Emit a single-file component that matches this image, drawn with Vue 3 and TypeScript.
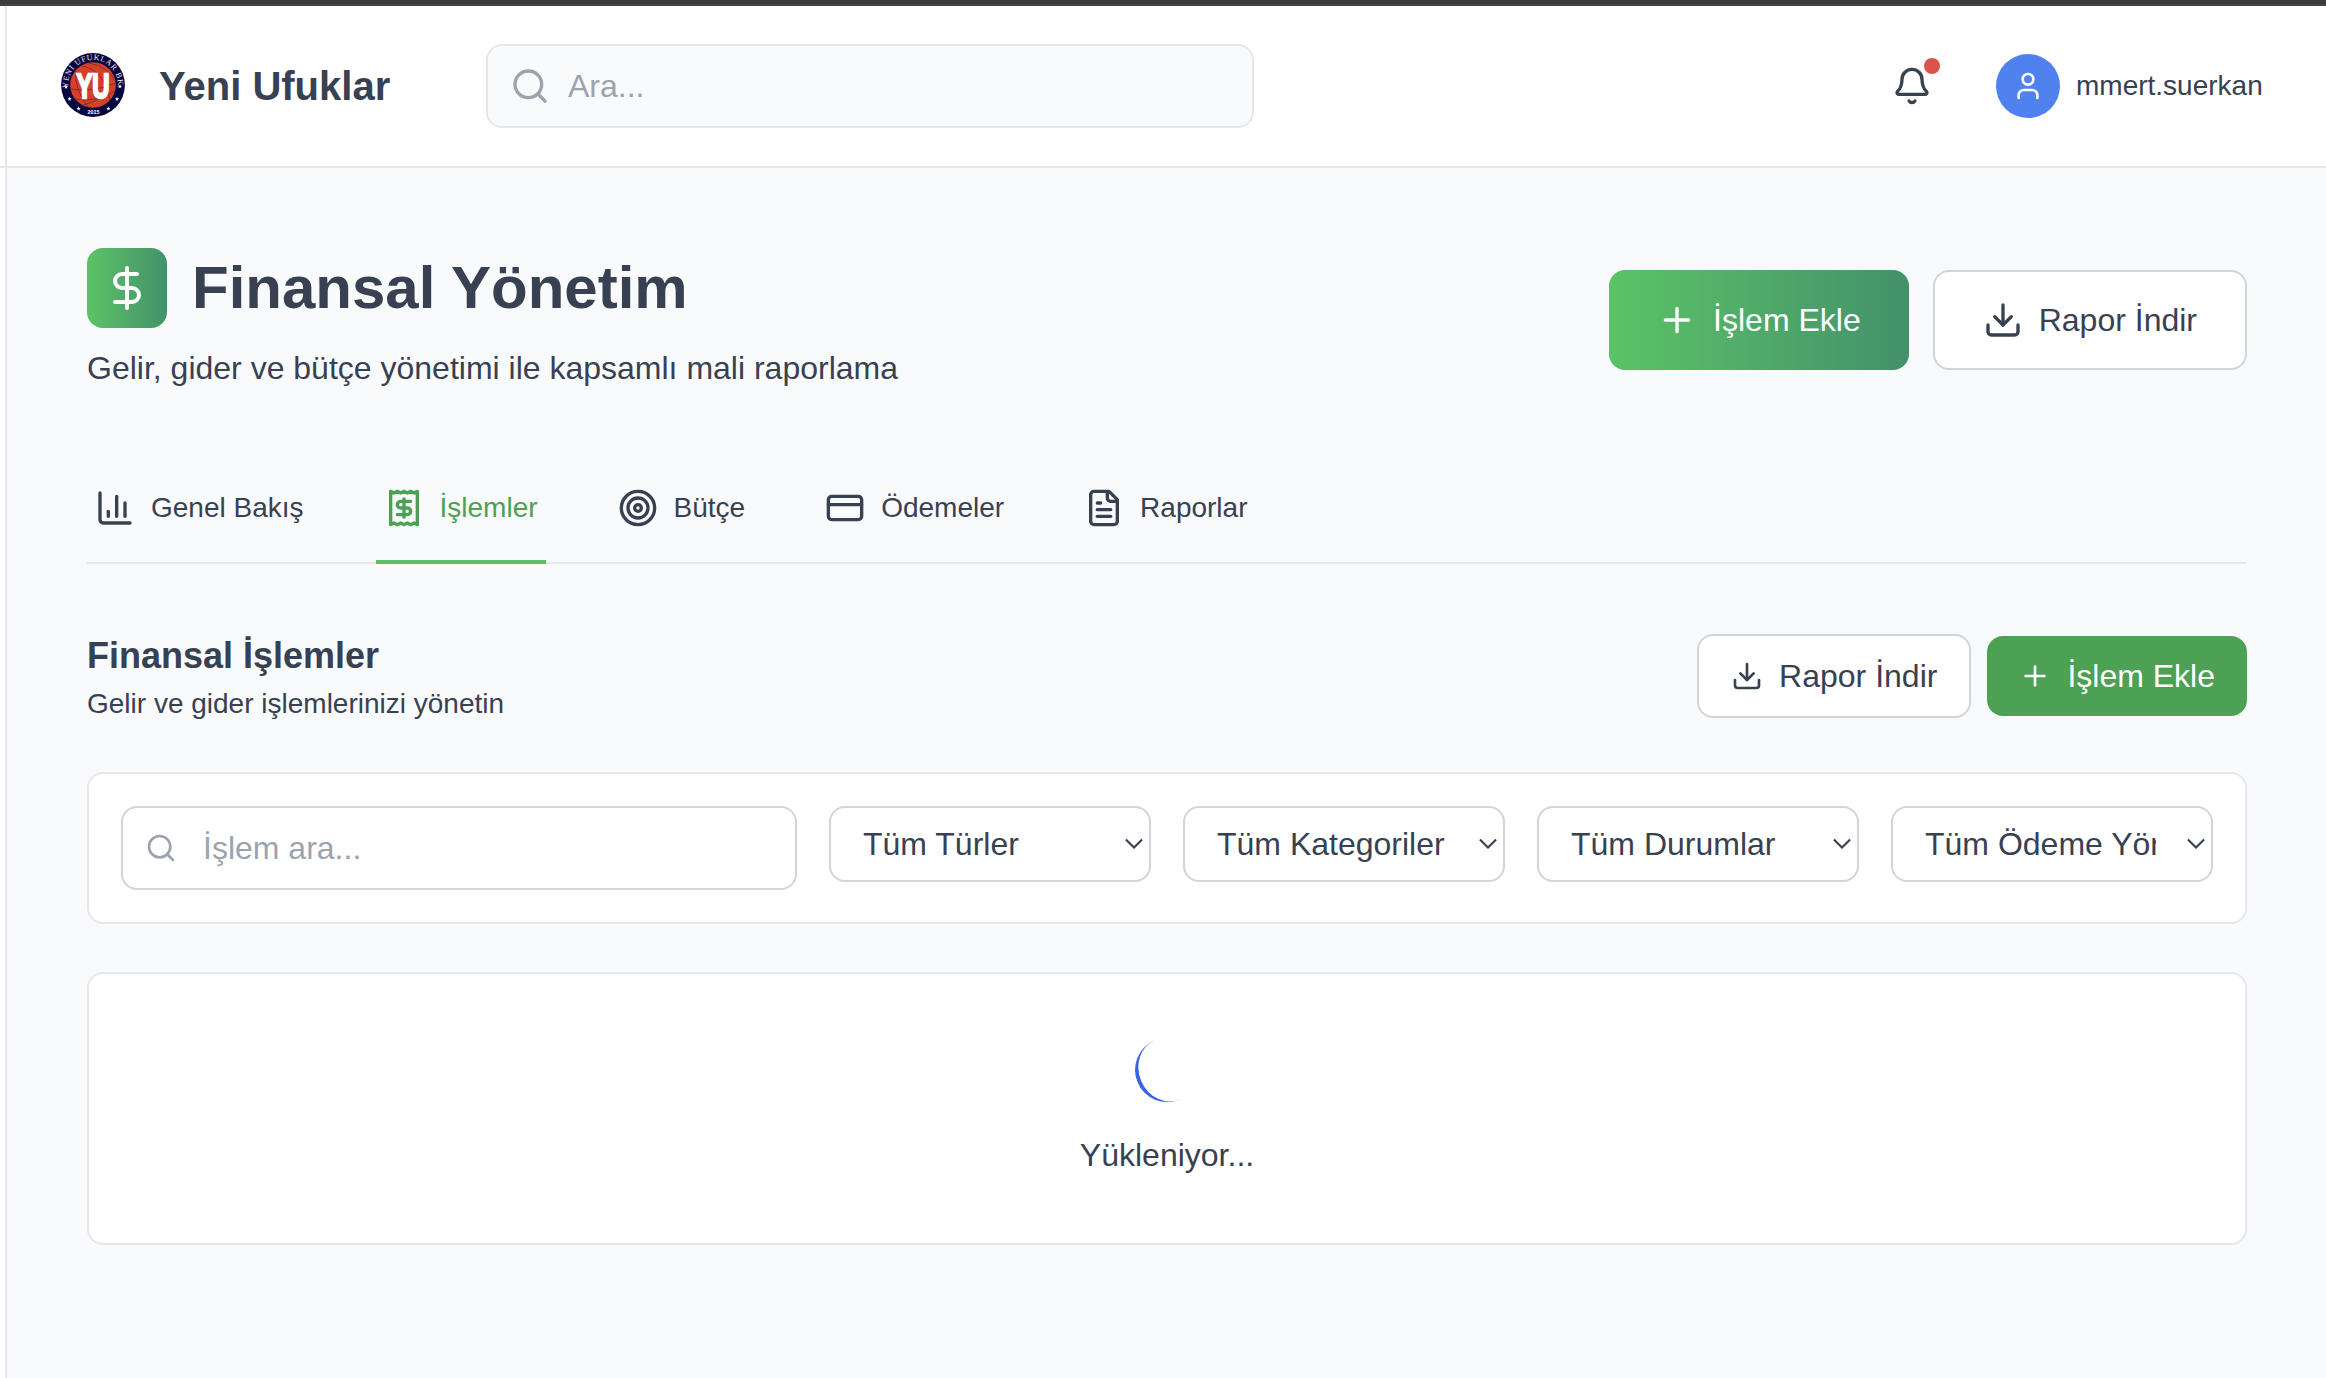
<script setup lang="ts">
import { h, type FunctionalComponent } from 'vue'

const iconPaths: Record<string, string[]> = {
  search: ['m21 21-4.34-4.34', 'M19 11a8 8 0 1 1-16 0a8 8 0 0 1 16 0Z'],
  bell: [
    'M10.268 21a2 2 0 0 0 3.464 0',
    'M3.262 15.326A1 1 0 0 0 4 17h16a1 1 0 0 0 .74-1.673C19.41 13.956 18 12.499 18 8A6 6 0 0 0 6 8c0 4.499-1.411 5.956-2.738 7.326',
  ],
  user: ['M19 21v-2a4 4 0 0 0-4-4H9a4 4 0 0 0-4 4v2', 'M16 7a4 4 0 1 1-8 0a4 4 0 0 1 8 0Z'],
  dollar: ['M12 2v20', 'M17 5H9.5a3.5 3.5 0 0 0 0 7h5a3.5 3.5 0 0 1 0 7H6'],
  plus: ['M5 12h14', 'M12 5v14'],
  download: ['M12 15V3', 'M21 15v4a2 2 0 0 1-2 2H5a2 2 0 0 1-2-2v-4', 'm7 10 5 5 5-5'],
  chart: ['M3 3v16a2 2 0 0 0 2 2h16', 'M18 17V9', 'M13 17V5', 'M8 17v-3'],
  receipt: [
    'M4 2v20l2-1 2 1 2-1 2 1 2-1 2 1 2-1 2 1V2l-2 1-2-1-2 1-2-1-2 1-2-1-2 1Z',
    'M16 8h-6a2 2 0 1 0 0 4h4a2 2 0 1 1 0 4H8',
    'M12 17.5v-11',
  ],
  target: [
    'M22 12a10 10 0 1 1-20 0a10 10 0 0 1 20 0Z',
    'M18 12a6 6 0 1 1-12 0a6 6 0 0 1 12 0Z',
    'M14 12a2 2 0 1 1-4 0a2 2 0 0 1 4 0Z',
  ],
  card: ['M4 5h16a2 2 0 0 1 2 2v10a2 2 0 0 1-2 2H4a2 2 0 0 1-2-2V7a2 2 0 0 1 2-2Z', 'M2 10h20'],
  file: [
    'M15 2H6a2 2 0 0 0-2 2v16a2 2 0 0 0 2 2h12a2 2 0 0 0 2-2V7Z',
    'M14 2v4a2 2 0 0 0 2 2h4',
    'M10 9H8',
    'M16 13H8',
    'M16 17H8',
  ],
}

const Icon: FunctionalComponent<{ name: string; size: number }> = (props) =>
  h(
    'svg',
    {
      width: props.size,
      height: props.size,
      viewBox: '0 0 24 24',
      fill: 'none',
      stroke: 'currentColor',
      'stroke-width': 2,
      'stroke-linecap': 'round',
      'stroke-linejoin': 'round',
      style: { display: 'block', flex: 'none' },
    },
    iconPaths[props.name].map((d) => h('path', { d })),
  )
Icon.props = ['name', 'size']

interface Tab {
  label: string
  icon: string
  active?: boolean
}

const tabs: Tab[] = [
  { label: 'Genel Bakış', icon: 'chart' },
  { label: 'İşlemler', icon: 'receipt', active: true },
  { label: 'Bütçe', icon: 'target' },
  { label: 'Ödemeler', icon: 'card' },
  { label: 'Raporlar', icon: 'file' },
]

const filters: string[] = ['Tüm Türler', 'Tüm Kategoriler', 'Tüm Durumlar', 'Tüm Ödeme Yöntemleri']

const stars = [
  [5, 34], [8.6, 46], [17.6, 55.6], [47.4, 55.6], [56, 46], [59, 33.4],
]
</script>

<template>
  <div class="window">
    <div class="frame-edge"></div>
    <div class="body">
      <div class="side"><div class="side-top"></div></div>
      <div class="app">
        <header class="topbar">
          <svg class="logo" width="64" height="64" viewBox="0 0 64 64">
            <defs>
              <path id="ring" d="M7.74 38A25 25 0 1 1 56.26 38" />
            </defs>
            <circle cx="32" cy="32" r="31.9" fill="#05053f" />
            <circle cx="32" cy="32" r="22.8" fill="#d5402b" />
            <g fill="none" stroke="#8f2a26" stroke-width="1">
              <path d="M9.5 36q22 4 45-6" />
              <path d="M20 13q22 2 29 34" />
              <path d="M28 10q20 4 26 18" />
              <path d="M14 46q20 4 40-8" />
              <path d="M22 52q16-4 26-14" />
              <path d="M15 18q-2 18 12 36" />
            </g>
            <text class="ring-text" font-size="8" fill="#e8e8f2">
              <textPath href="#ring" startOffset="50%" text-anchor="middle" textLength="84">YENİ UFUKLAR BK.</textPath>
            </text>
            <text
              class="mono-text"
              x="32"
              y="45"
              text-anchor="middle"
              font-size="34.5"
              textLength="33"
              lengthAdjust="spacingAndGlyphs"
              fill="#fff"
              stroke="#fff"
              stroke-width="2.4"
            >YU</text>
            <text class="year-text" x="32.5" y="60.6" text-anchor="middle" font-size="5.4" fill="#fff">2015</text>
            <path
              v-for="(s, i) in stars"
              :key="i"
              :transform="`translate(${s[0]} ${s[1]})`"
              d="M0-2.2 .6-.7 2.1-.7 .9.3 1.3 1.8 0 .9-1.3 1.8-.9.3-2.1-.7-.6-.7Z"
              fill="#fff"
            />
          </svg>
          <div class="brand">Yeni Ufuklar</div>
          <div class="global-search">
            <Icon name="search" :size="40" />
            <span>Ara...</span>
          </div>
          <div class="bell">
            <Icon name="bell" :size="40" />
            <i class="dot"></i>
          </div>
          <div class="avatar"><Icon name="user" :size="32" /></div>
          <div class="username">mmert.suerkan</div>
        </header>

        <main class="page">
          <section class="hero">
            <div>
              <div class="hero-title">
                <div class="hero-icon"><Icon name="dollar" :size="48" /></div>
                <h1>Finansal Yönetim</h1>
              </div>
              <p class="hero-sub">Gelir, gider ve bütçe yönetimi ile kapsamlı mali raporlama</p>
            </div>
            <div class="hero-actions">
              <button class="btn lg gradient"><Icon name="plus" :size="40" />İşlem Ekle</button>
              <button class="btn lg outline"><Icon name="download" :size="40" />Rapor İndir</button>
            </div>
          </section>

          <nav class="tabs">
            <a v-for="t in tabs" :key="t.label" class="tab" :class="{ active: t.active }">
              <Icon :name="t.icon" :size="40" />{{ t.label }}
            </a>
          </nav>

          <section class="section-head">
            <div>
              <h2>Finansal İşlemler</h2>
              <p>Gelir ve gider işlemlerinizi yönetin</p>
            </div>
            <div class="section-actions">
              <button class="btn sm outline"><Icon name="download" :size="32" />Rapor İndir</button>
              <button class="btn sm solid"><Icon name="plus" :size="32" />İşlem Ekle</button>
            </div>
          </section>

          <section class="card filters">
            <div class="search">
              <Icon name="search" :size="32" />
              <span>İşlem ara...</span>
            </div>
            <div v-for="f in filters" :key="f" class="select">
              <span>{{ f }}</span>
              <svg width="20" height="12" viewBox="0 0 20 12" fill="none" stroke="currentColor" stroke-width="2.1">
                <path d="M1.9 1.4 10 9.6 18.1 1.4" />
              </svg>
            </div>
          </section>

          <section class="card loading">
            <div class="spinner"></div>
            <p>Yükleniyor...</p>
          </section>
        </main>
      </div>
    </div>
  </div>
</template>

<style>
body {
  background: #f9fafc;
  overflow: hidden;
}
</style>

<style scoped>
.window,
.window * {
  box-sizing: border-box;
}
.window {
  width: 2326px;
  height: 1378px;
  display: flex;
  flex-direction: column;
  overflow: hidden;
  font-family: 'Liberation Sans', Arial, sans-serif;
  font-size: 32px;
  line-height: 48px;
  color: #384151;
  background: #f9fafc;
}
h1,
h2,
p {
  margin: 0;
}
.frame-edge {
  flex: none;
  height: 6px;
  background: #3c3c3c;
  border-bottom: 2px solid #454246;
}
.body {
  flex: 1;
  display: flex;
}
.side {
  width: 7px;
  background: #fff;
  border-right: 2px solid #e5e7eb;
}
.side-top {
  height: 162px;
  border-bottom: 2px solid #e5e7eb;
}
.app {
  flex: 1;
  min-width: 0;
}
.topbar {
  height: 162px;
  display: flex;
  align-items: center;
  padding: 0 64px 0 54px;
  background: #fff;
  border-bottom: 2px solid #e5e7eb;
}
.logo {
  flex: none;
  margin: -2px 0 0 -0.5px;
}
.ring-text {
  font-family: 'Liberation Serif', serif;
}
.mono-text,
.year-text {
  font-family: 'Liberation Sans', sans-serif;
  font-weight: 700;
}
.brand {
  width: 327px;
  margin-left: 34.5px;
  font-size: 40px;
  font-weight: 700;
  white-space: nowrap;
}
.global-search {
  width: 768px;
  height: 84px;
  display: flex;
  align-items: center;
  gap: 18px;
  padding-left: 22px;
  border: 2px solid #e5e7eb;
  border-radius: 16px;
  background: #f9fafc;
  color: #9ca3af;
}
.bell {
  position: relative;
  margin-left: auto;
}
.dot {
  position: absolute;
  top: -8px;
  right: -8px;
  width: 16px;
  height: 16px;
  border-radius: 50%;
  background: #dc524c;
}
.avatar {
  width: 64px;
  height: 64px;
  margin-left: 64px;
  border-radius: 50%;
  background: #4f82ef;
  color: #fff;
  display: flex;
  align-items: center;
  justify-content: center;
}
.username {
  width: 186px;
  margin-left: 16px;
  font-size: 28px;
  white-space: nowrap;
}
.page {
  padding: 80px 79px 0 80px;
}
.hero {
  height: 144px;
  display: flex;
  justify-content: space-between;
}
.hero-title {
  display: flex;
  align-items: center;
  gap: 25px;
}
.hero-icon {
  width: 80px;
  height: 80px;
  display: flex;
  align-items: center;
  justify-content: center;
  border-radius: 16px;
  color: #fff;
  background: linear-gradient(90deg, #5cc367, #43916b);
}
h1 {
  font-size: 60px;
  line-height: 72px;
  font-weight: 700;
}
.hero-sub {
  margin-top: 16px;
}
.hero-actions,
.section-actions {
  display: flex;
  align-items: center;
}
.hero-actions {
  gap: 24px;
}
.section-actions {
  gap: 16px;
}
.btn {
  display: flex;
  align-items: center;
  gap: 16px;
  border: 0;
  border-radius: 16px;
  font: inherit;
  color: inherit;
  white-space: nowrap;
}
.btn.lg {
  height: 100px;
  padding: 0 48px;
}
.btn.sm {
  height: 80px;
  padding: 0 32px;
}
.btn.outline {
  border: 2px solid #d1d5db;
  background: #fff;
}
.btn.sm.outline {
  height: 84px;
}
.btn.gradient {
  color: #fff;
  background: linear-gradient(90deg, #5cc367, #43916b);
}
.btn.solid {
  color: #fff;
  background: #4ca154;
}
.tabs {
  height: 112px;
  margin-top: 60px;
  display: flex;
  gap: 64px;
  border-bottom: 2px solid #e5e7eb;
}
.tab {
  height: 112px;
  display: flex;
  align-items: center;
  gap: 16px;
  padding: 4px 8px 0;
  border-bottom: 4px solid transparent;
  font-size: 28px;
}
.tab.active {
  color: #4ca154;
  border-color: #5bbf68;
}
.section-head {
  height: 84px;
  margin-top: 70px;
  display: flex;
  justify-content: space-between;
  align-items: center;
}
h2 {
  font-size: 36px;
  line-height: 56px;
  font-weight: 700;
}
.section-head p {
  font-size: 28px;
  line-height: 40px;
}
.card {
  border: 2px solid #e5e7eb;
  border-radius: 16px;
  background: #fff;
}
.filters {
  height: 152px;
  margin-top: 54px;
  padding: 32px;
  display: grid;
  grid-template-columns: 2fr repeat(4, 322px);
  gap: 32px;
  align-items: start;
}
.search {
  height: 84px;
  display: flex;
  align-items: center;
  gap: 26px;
  padding-left: 22px;
  border: 2px solid #d1d5db;
  border-radius: 16px;
  color: #9ca3af;
}
.select {
  height: 76px;
  display: flex;
  align-items: center;
  justify-content: space-between;
  padding: 0 5px 0 32px;
  border: 2px solid #d1d5db;
  border-radius: 16px;
}
.select span {
  width: 231px;
  overflow: hidden;
  white-space: nowrap;
}
.loading {
  height: 273px;
  margin-top: 48px;
  padding-top: 64px;
  display: flex;
  flex-direction: column;
  align-items: center;
}
.spinner {
  width: 64px;
  height: 64px;
  border-radius: 50%;
  border-bottom: 4px solid #3864e6;
  transform: rotate(67deg);
}
.loading p {
  margin-top: 29px;
}
</style>
